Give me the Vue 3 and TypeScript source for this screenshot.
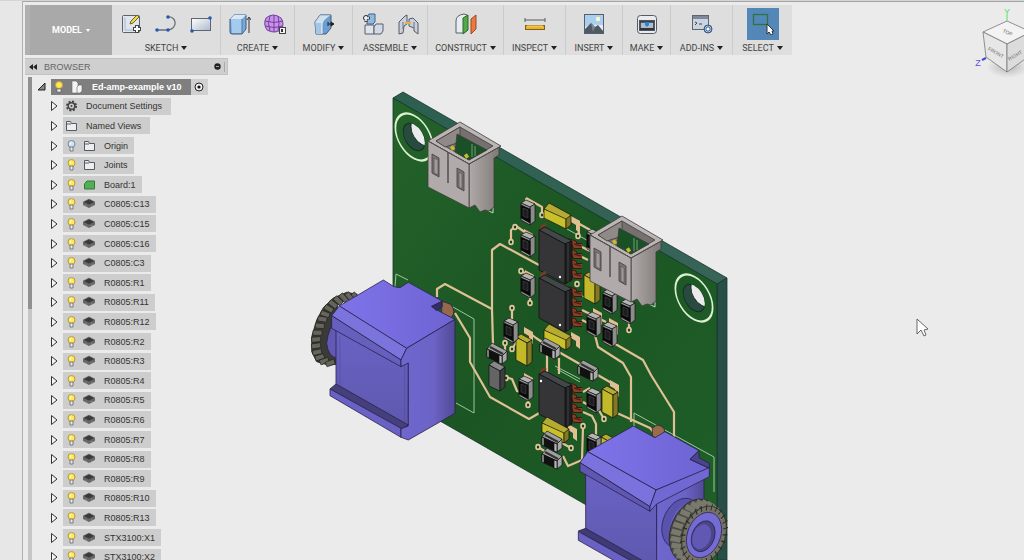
<script setup lang="ts">
interface ToolGroup { label: string; icons: string[]; active?: boolean }
interface TreeNode { label: string; icon: 'gear' | 'folder' | 'board' | 'part'; bulb?: 'on' | 'off' }
type Point = [number, number]

const icons: Record<string, string> = {
  sketch: '<rect x="2.500" y="2.500" width="17" height="17" rx="1" fill="#dfe5ee" stroke="#5a6270"/><path d="M5 5v12h12" fill="none" stroke="#a9b6ca"/><path d="M10 11l1-3 6-6 2 2-6 6z" fill="#f0dc3c" stroke="#6b6424"/><path d="M17 12v8M13 16h8" stroke="#444" stroke-width="4"/><path d="M17 13v6M14 16h6" stroke="#fff" stroke-width="2"/>',
  arc: '<path d="M1 17h12M13 4c9-1 10 12 0 13" fill="none" stroke="#68707c" stroke-width="1.300"/><g fill="#2858b0"><circle cx="2" cy="17" r="1.800"/><circle cx="13" cy="17" r="1.800"/><circle cx="13" cy="4" r="1.800"/></g>',
  rect: '<defs><linearGradient id="rg" x2="1" y2="1"><stop stop-color="#fff"/><stop offset="1" stop-color="#aeb9cb"/></linearGradient></defs><rect x="1.500" y="5.500" width="19" height="12" fill="url(#rg)" stroke="#5d6675"/><circle cx="20" cy="5" r="1.800" fill="#2858b0"/><circle cx="2" cy="18" r="1.800" fill="#2858b0"/>',
  extrude: '<path d="M1 6l4-4h12v14l-4 5H3q-2 0-2-2z" fill="#76a9dc" stroke="#435a76"/><path d="M1 6l4-4h12l-4 4z" fill="#d7e9f8"/><path d="M2 6h11v14H3z" fill="#a4cbee"/><path d="M13 6v14" stroke="#56789c"/><path d="M20 20V5M18 7l2-3 2 3" fill="none" stroke="#333"/>',
  form: '<path d="M2 5q7-6 15 0 4 6 0 12-7 4-14 0-4-6-1-12z" fill="#c793e8" stroke="#7540a0"/><path d="M6 3q-3 7 0 15M10 2v17M14 3q2 7 0 15M1 8q9 3 18 0M1 13q9 3 18 0" fill="none" stroke="#7540a0"/><rect x="15.500" y="14.500" width="6" height="6" fill="#f4f4f4" stroke="#444"/><path d="M17 16h2v3h-2z" fill="#333"/>',
  modify: '<path d="M2 9l5-7h11v13l-5 6H3z" fill="#6a9fd4" stroke="#435a76"/><path d="M2 9l5-7h11l-5 4q-2 1-3 5v10H3z" fill="#cfe0ef" stroke="#6f8aa6" stroke-width=".600"/><path d="M3 10h5v10H3z" fill="#a4c6e6"/><path d="M15 11h5M18 9l3 2-3 2zM15 9v4" fill="#222" stroke="#222"/>',
  assemble: '<path d="M3 12h9v9H3z" fill="#dfe4eb" stroke="#555f6e"/><path d="M12 14l2-3h7v7l-2 3h-7z" fill="#d4dae3" stroke="#555f6e"/><path d="M5 4l2-3h6v8l-2 2H5z" fill="#8db9e3" stroke="#46607c"/><path d="M4 2v7M1 5h7" stroke="#444" stroke-width="3"/><path d="M4 3v5M2 5h5" stroke="#fff" stroke-width="1.500"/>',
  joint: '<path d="M2 9l6-6 2-1v9l-3 2-1 7-4 1z" fill="#c9d0d9" stroke="#525b68"/><path d="M12 6l4-1 5 5v11l-4-3v-3l-5-2z" fill="#c9d0d9" stroke="#525b68"/><path d="M6 9v7M17 9v6" stroke="#68727f"/><path d="M8 10h6" stroke="#e8ad52" stroke-width="2"/>',
  construct: '<path d="M1 20V8q0-6 8-7l3 1v15l-4 3z" fill="#e8ebef" stroke="#54606a"/><path d="M8 5l5-3v15l-5 4z" fill="#55a847" stroke="#2d6b29"/><path d="M16 6l5-4v14l-5 5z" fill="#ed7a3c" stroke="#984a25"/>',
  inspect: '<path d="M1 7h20M1 5v4M21 5v4" fill="none" stroke="#565c64"/><rect x="1.500" y="12.500" width="19" height="4" fill="#eab42e" stroke="#80611c"/><path d="M3 13h16" stroke="#ffda6b"/>',
  insert: '<rect x="1.500" y="1.500" width="19" height="19" fill="#a8cff0" stroke="#56606c"/><path d="M2 14q4-3 18-2v8H2z" fill="#e9edf1"/><path d="M2 20v-4l6-6 4 4 3-2 5 6v2z" fill="#4e5965"/><path d="M8 10l4 4-2 5z" fill="#7c8791"/><circle cx="15" cy="6" r="2.200" fill="#fff8c4"/>',
  make: '<rect x="1.500" y="2.500" width="19" height="18" rx="3" fill="#e9ebee" stroke="#555b64"/><rect x="3" y="7" width="16" height="11" fill="#4d5560"/><path d="M5 9h12v7H5z" fill="#aebccb"/><path d="M4 9h14" stroke="#333b46" stroke-width="1.500"/><path d="M9 9h4v3l-2 2-2-2z" fill="#2d83d2"/><path d="M4 16h14" stroke="#333" stroke-width="2"/>',
  addins: '<rect x="1.500" y="2.500" width="16" height="14" fill="#cbd4e0" stroke="#5d6571"/><path d="M2 3h15v3H2z" fill="#7d8998"/><path d="M4 9l2 1-2 2M8 11h3" fill="none" stroke="#444"/><circle cx="17" cy="16" r="4" fill="#b5cbea" stroke="#38567f"/><path d="M17 12v8M13 16h8M14 13l6 6M20 13l-6 6" stroke="#38567f" stroke-width=".800"/><circle cx="17" cy="16" r="1.300" fill="#fff"/>',
  select: '<rect x="1.500" y="1.500" width="14" height="10" fill="none" stroke="#2f7440" stroke-width="1.300"/><path d="M15 11v10l2-2 2 3 2-1-1-3h2z" fill="#fff" stroke="#333"/>',
}

const groups: ToolGroup[] = [
  { label: 'SKETCH', icons: ['sketch', 'arc', 'rect'] },
  { label: 'CREATE', icons: ['extrude', 'form'] },
  { label: 'MODIFY', icons: ['modify'] },
  { label: 'ASSEMBLE', icons: ['assemble', 'joint'] },
  { label: 'CONSTRUCT', icons: ['construct'] },
  { label: 'INSPECT', icons: ['inspect'] },
  { label: 'INSERT', icons: ['insert'] },
  { label: 'MAKE', icons: ['make'] },
  { label: 'ADD-INS', icons: ['addins'] },
  { label: 'SELECT', icons: ['select'], active: true },
]

const parts = ['C0805:C13', 'C0805:C15', 'C0805:C16', 'C0805:C3', 'R0805:R1', 'R0805:R11', 'R0805:R12', 'R0805:R2', 'R0805:R3', 'R0805:R4', 'R0805:R5', 'R0805:R6', 'R0805:R7', 'R0805:R8', 'R0805:R9', 'R0805:R10', 'R0805:R13', 'STX3100:X1', 'STX3100:X2']
const nodes: TreeNode[] = [
  { label: 'Document Settings', icon: 'gear' },
  { label: 'Named Views', icon: 'folder' },
  { label: 'Origin', icon: 'folder', bulb: 'off' },
  { label: 'Joints', icon: 'folder', bulb: 'on' },
  { label: 'Board:1', icon: 'board', bulb: 'on' },
  ...parts.map((label): TreeNode => ({ label, icon: 'part', bulb: 'on' })),
]

const traces = [
  'M437 297V289L445 284L490 308L492 309V250L500 244L539 265',
  'M492 309L493 345', 'M455 313L470 338V362L490 397L529 419L541 412',
  'M595 335L598 347L623 363L631 377V422', 'M612 342L643 360L651 375L674 412V440',
  'M617 413L650 428L662 442', 'M583 412L592 416L596 424V436',
  'M583 427L582 460L568 466L563 456', 'M557 351L585 367', 'M596 374L615 385',
  'M547 355V372M559 358V374', 'M511 241V230L516 226L529 235', 'M526 198L542 207V215L548 219',
  'M567 217L592 231', 'M578 220L579 236', 'M521 271L529 275', 'M530 303V295', 'M512 308V325',
  'M582 247L590 251M582 257L588 260M582 310L606 322M582 320L590 324', 'M629 330V316',
  'M528 405V393', 'M538 447L546 452M571 448L562 443', 'M583 392L590 388M583 402L590 406',
  'M604 419L597 407', 'M505 377L512 379L517 391L523 393', 'M526 330L536 338L545 344', 'M512 349L518 340M505 343V352',
]
const vias: Point[] = [[515, 227], [511, 242], [521, 271], [530, 303], [512, 308], [505, 343], [578, 236], [577, 284], [629, 330], [542, 215], [528, 405], [538, 447], [571, 448], [583, 426], [604, 419], [512, 349], [506, 378]]
const pads: Point[] = [[525, 198], [571, 216], [524, 229], [525, 270], [524, 327], [610, 380], [593, 308], [571, 332], [568, 424], [524, 373], [609, 318]]
const tallChips: Point[] = [[587, 229], [521, 200], [521, 232], [521, 273], [504, 318], [603, 289], [621, 299], [587, 312], [603, 322], [519, 376], [587, 388], [587, 433]]
const wideChips: Point[] = [[487, 343], [540, 338], [578, 360], [542, 431], [542, 448]]
const wideYellow: Point[] = [[544, 203], [544, 324], [542, 417]]
const tallYellow: Point[] = [[584, 272], [516, 334], [602, 386], [601, 434]]
const circuits: Point[] = [[539, 227], [539, 275], [539, 371]]
const connectors: Point[] = [[0, 0], [162, 94]]
const holes: Point[] = [[414, 137], [694, 298]]

const knurl = Array.from({ length: 26 }, (_, i) => {
  const a = (i / 26) * Math.PI * 2
  return { x: Math.cos(a), y: Math.sin(a) }
})
const sideTeeth: Point[] = [[158, 85], [140, 84], [122, 88], [105, 97], [89, 109], [75, 124], [63, 142], [54, 160], [46, 181], [39, 203], [35, 224], [35, 244], [38, 264], [46, 280], [60, 292], [78, 298]]
</script>

<template>
  <div class="app">
    <main class="viewport" aria-label="Model viewport">
      <svg class="model" viewBox="0 0 1024 560" stroke-linejoin="round">
        <defs>
          <linearGradient id="boardFill" x1="0" y1="0" x2="1" y2="1">
            <stop offset="0" stop-color="#24632a" /><stop offset=".45" stop-color="#1b5523" /><stop offset="1" stop-color="#206029" />
          </linearGradient>
          <linearGradient id="edgeFill"><stop stop-color="#2c5f50" /><stop offset="1" stop-color="#386458" /></linearGradient>
          <linearGradient id="plastic"><stop stop-color="#b0aaa8" /><stop offset="1" stop-color="#7f7977" /></linearGradient>
          <linearGradient id="jackTop" x1="0" y1="0" x2="1" y2="0"><stop stop-color="#7f73ea" /><stop offset="1" stop-color="#6e63d2" /></linearGradient>
          <linearGradient id="jackSide"><stop stop-color="#7067cf" /><stop offset=".6" stop-color="#6c63c6" /><stop offset="1" stop-color="#514a96" /></linearGradient>
          <linearGradient id="jackFront" x1="0" y1="0" x2="0" y2="1"><stop stop-color="#6962c4" /><stop offset="1" stop-color="#5e59ae" /></linearGradient>
          <clipPath id="bore"><circle r="12.500" /></clipPath>
        </defs>

        <g stroke="#17352c" stroke-width=".8">
          <path d="M393 98L403 92L727 278L717 284Z" fill="url(#edgeFill)" />
          <path d="M717 284L727 278V560H717Z" fill="#284f47" />
          <path d="M393 98L717 284V580L393 394Z" fill="url(#boardFill)" />
        </g>

        <g v-for="[x, y] in holes" :key="x" :transform="`matrix(.866 .44 0 1 ${x} ${y})`">
          <circle r="21.500" fill="none" stroke="#dcf0d4" stroke-width="2" />
          <circle r="12.500" fill="#294a40" stroke="#152f22" />
          <g clip-path="url(#bore)"><circle cx="9" cy="-9" r="12.500" fill="#ebebeb" stroke="#152f22" /></g>
        </g>

        <g fill="none" stroke="#9fc79b" stroke-width="1">
          <path d="M395 287L396 274L408 280M453 307L474 319V413L456 403" />
          <path d="M634 436V413L714 457V492M560 225L592 243M557 369L580 382M555 366L580 379M562 284L584 297" />
          <path d="M493 157V213L487 210M655 251V307L649 304" stroke="#c4dec0" />
        </g>

        <g fill="none" stroke="#dfc195" stroke-width="2.200">
          <path v-for="d in traces" :key="d" :d="d" />
        </g>
        <g fill="#e0bf91">
          <path v-for="[x, y] in pads" :key="`${x}-${y}`" :transform="`translate(${x} ${y})`" d="M0 0L9 5V17L5 14V9L0 6Z" />
        </g>
        <g fill="#173f20" stroke="#e3c89e" stroke-width="1.600">
          <ellipse v-for="[x, y] in vias" :key="`${x}-${y}`" :cx="x" :cy="y" rx="2" ry="2.400" />
        </g>

        <g v-for="[x, y] in circuits" :key="y" :transform="`translate(${x} ${y})`">
          <path d="M2 0L7 -3M1 3L5 -1" stroke="#743c25" stroke-width="3" />
          <g v-for="n in 4" :key="n" :transform="`translate(29 ${n * 10 + 4})`">
            <path d="M0 0L6 2L7 5L14 5" fill="none" stroke="#35180f" stroke-width="6" />
            <path d="M0 0L6 2L7 5L14 5" fill="none" stroke="#873f27" stroke-width="4" />
            <path d="M6 3L13 5" stroke="#4d2316" stroke-width="1.500" />
          </g>
          <g stroke="#111" stroke-width=".8">
            <path d="M0 3L6 0L33 14L26 17Z" fill="#44474a" />
            <path d="M26 17L33 14V53L26 57Z" fill="#1e1e20" />
            <path d="M0 3L26 17V57L0 43Z" fill="#353436" />
            <path d="M29 16V55" stroke="#4b4a4c" />
          </g>
          <circle :cx="y > 300 ? 2 : 21" :cy="y > 300 ? 10 : 50" r="1.200" fill="#fff" />
        </g>

        <g stroke="#111" stroke-width=".7">
          <g v-for="[x, y] in wideYellow" :key="y" :transform="`translate(${x} ${y})`">
            <path d="M0 6L5 0L27 12L22 18Z" fill="#b5ab32" />
            <path d="M0 6L22 16V26L0 15Z" fill="#c9c02c" /><path d="M22 16L27 12V22L22 26Z" fill="#817a22" />
          </g>
          <g v-for="[x, y] in tallYellow" :key="y" :transform="`translate(${x} ${y})`">
            <path d="M0 3L5 0L16 6L11 9Z" fill="#b5ab32" />
            <path d="M0 3L11 9V32L0 26Z" fill="#c2b92a" /><path d="M11 9L16 6V28L11 32Z" fill="#817a22" />
          </g>
          <g transform="translate(489 361)">
            <path d="M0 4L5 0L16 6L11 10Z" fill="#898789" /><path d="M0 4L11 10V30L0 25Z" fill="#656465" /><path d="M11 10L16 6V26L11 30Z" fill="#3d3c3e" />
          </g>
          <g v-for="[x, y] in tallChips" :key="`${x}-${y}`" :transform="`translate(${x} ${y})`">
            <path d="M0 3L5 0L14 4L9 7Z" fill="#b4b4b4" /><path d="M9 7L14 4V21L9 25Z" fill="#8d8c8d" />
            <path d="M0 3L9 7V25L0 20Z" fill="#a2a1a1" /><path d="M0 5L9 9V23L0 18Z" fill="#080808" />
            <path d="M2 8L7 10V18L2 16Z" fill="#1d1d20" stroke="#555" stroke-width=".5" />
          </g>
          <g v-for="[x, y] in wideChips" :key="y" :transform="`translate(${x} ${y})`">
            <path d="M0 6L5 0L20 8L15 13Z" fill="#a1a0a0" /><path d="M15 13L20 8V17L15 21Z" fill="#aaa9a9" />
            <path d="M0 6L15 13V21L0 14Z" fill="#111" /><path d="M0 6L2 7V15L0 14ZM12 12L15 13V21L12 20Z" fill="#b5b4b4" />
            <path d="M3 4L16 11" stroke="#333" stroke-width="2" />
          </g>
        </g>

        <g v-for="[x, y] in connectors" :key="x" :transform="`translate(${x} ${y})`" stroke="#403c3b" stroke-width=".8">
          <path d="M469 164L499 147V155L494 158V207L489 211L485 210L480 212L475 205L469 208Z" fill="url(#plastic)" />
          <path d="M428 141L460 122L501 146L469 164Z" fill="#bbb6b4" />
          <path d="M436 141L460 127L493 146L469 160Z" fill="#767170" />
          <path d="M436 141L460 127V142L445 147Z" fill="#8f8a88" />
          <path d="M457 134L487 150L469 160L455 152Z" fill="#195026" />
          <path d="M472 144V157M475 146V156" stroke="#8ab68a" />
          <path d="M428 141L469 164V208L428 187Z" fill="#b0abaa" />
          <path d="M432 154L439 158V177L432 173ZM457 168L464 172V191L457 187Z" fill="#7b7674" />
          <path d="M434 158L438 160V175L434 173ZM459 172L462 174V189L459 187Z" fill="#a09b99" stroke-width=".5" />
          <path d="M448 152V183" stroke="#47403e" stroke-width="1.300" />
          <path d="M428 141L469 164L501 146" fill="none" stroke="#55504e" />
          <path d="M451 149L454 147M465 157L468 155" stroke="#c5bb30" stroke-width="4" />
        </g>

        <g transform="translate(300 265) scale(.3333)" stroke="#28224b" stroke-width="2.400">
          <path d="M172 88L140 82L100 99L70 128L50 165L35 215L35 260L50 290L85 300L112 298V120Z" fill="#3a3a36" stroke="#20201e" />
          <g v-for="[x, y] in sideTeeth" :key="`${x}-${y}`" stroke="#20201e" stroke-width="2">
            <rect :x="x" :y="y - 7" width="27" height="15" rx="2" fill="#66655c" :transform="`rotate(${y < 150 ? 50 - (y - 84) / 2 : 10 - (y - 150) / 5} ${x} ${y})`" />
          </g>
          <path d="M112 165Q85 185 80 235Q84 275 112 280Z" fill="#6259b3" />
          <path d="M425 108L452 118Q470 140 454 158L425 145Z" fill="#96684b" />
          <path d="M118 123L250 45L282 65L300 68L325 52L428 109L395 124L420 140L465 163L320 250Z" fill="url(#jackTop)" />
          <path d="M395 124L427 108V125L410 137Z" fill="#322d68" />
          <path d="M108 195L325 295V490L108 362Z" fill="url(#jackFront)" />
          <path d="M120 215L120 365M314 300V480" stroke="#504997" stroke-width="1.500" />
          <path d="M118 123L320 250L303 285L95 152Z" fill="#7c74dd" />
          <path d="M95 152L303 285V305L95 190Z" fill="#675fbd" />
          <path d="M108 357L325 480L303 492L90 372Z" fill="#453f7c" />
          <path d="M90 372L303 490V517L90 392Z" fill="#6a61c4" />
          <path d="M320 250L465 163V445L325 525L303 517V492L325 483V294L303 305V285Z" fill="url(#jackSide)" />
        </g>

        <g transform="translate(570 410) scale(.3333)" stroke="#28224b" stroke-width="2.400">
          <path d="M247 76V55Q265 35 283 57V78L258 86Z" fill="#9a6b48" />
          <path d="M47 190L260 285V470H225L47 360Z" fill="url(#jackFront)" />
          <path d="M260 280L402 200V460H260Z" fill="url(#jackSide)" />
          <path d="M53 125L190 48L255 83L285 65L387 122L360 148L418 175L258 240Z" fill="url(#jackTop)" />
          <path d="M360 148L387 122V143L418 160V175Z" fill="#4a438d" />
          <path d="M53 125L258 240L240 290L30 158Z" fill="#7b72dd" />
          <path d="M30 158L240 290V304L30 184Z" fill="#5f57b1" />
          <path d="M258 240L418 173V200L260 282L240 304V290Z" fill="#7268d3" />
          <path d="M47 355L232 460H190L25 363Z" fill="#403a75" />
          <path d="M25 365L190 456H140L25 391Z" fill="#6a61c4" />
        </g>
        <g stroke="#28224b" stroke-width=".8">
          <circle r="24" transform="matrix(.8 -.25 0 1 681 523)" fill="#5a53ae" />
          <circle r="23" transform="matrix(.8 -.25 0 1 688 526)" fill="#6d63ce" stroke="none" />
          <circle r="31" transform="matrix(.8 -.25 0 1 694 531)" fill="#4b4a43" stroke="#222" />
          <g transform="matrix(.8 -.25 0 1 694 531)" stroke="#7a796e" stroke-width="5">
            <path v-for="(k, i) in knurl" :key="i" :d="`M${k.x * 29} ${k.y * 29}L${k.x * 27 + 10} ${k.y * 27 + 5}`" />
          </g>
          <g transform="matrix(.8 -.25 0 1 704 535)">
            <circle r="28" fill="#747267" stroke="#292923" />
            <path v-for="(k, i) in knurl" :key="i" :d="`M${k.x * 24} ${k.y * 24}L${k.x * 30} ${k.y * 30}`" stroke="#2b2a26" stroke-width="1.200" />
            <circle r="22" fill="#756cd3" /><circle r="15" cx="-1" cy="1" fill="#4b448b" />
            <circle cx="-3" cy="1" r="12" fill="#6158b4" stroke="none" />
          </g>
          <path d="M917 319V334L921 330L924 336L926 335L924 330L928 329Z" fill="#fff" stroke="#444" />
        </g>
      </svg>

      <svg class="cube" width="50" height="72" viewBox="974 6 50 72" role="img" aria-label="View cube">
        <defs><radialGradient id="cubeShadow"><stop stop-color="#777" stop-opacity=".5" /><stop offset="1" stop-color="#999" stop-opacity="0" /></radialGradient></defs>
        <ellipse cx="1008" cy="67" rx="22" ry="11" fill="url(#cubeShadow)" />
        <g stroke="#777" stroke-width=".8">
          <path d="M983 32L1007 21L1031 32L1007 44Z" fill="#f3f3f3" />
          <path d="M983 32L1007 44V72L986 57Z" fill="#e7e7e7" />
          <path d="M1007 44L1031 32L1028 57L1007 72Z" fill="#dcdcdc" />
        </g>
        <path d="M1007 15V21" stroke="#5be35b" /><path d="M982 60L986 58" stroke="#4b47c8" stroke-width="2" />
        <g class="cube-text" text-anchor="middle">
          <text x="1007" y="15" fill="#55e255" class="axis">Y</text>
          <text x="978" y="66" fill="#5955dc" class="axis">Z</text>
          <text transform="translate(1007 34) rotate(24)">TOP</text>
          <text transform="translate(995 54) rotate(30)">FRONT</text>
          <text transform="translate(1016 57) rotate(-30)">RIGHT</text>
        </g>
      </svg>
    </main>

    <div class="shell">
      <div class="gutter"></div>
      <div class="workspace">
        <nav class="toolbar" aria-label="Tools">
          <button class="mode" type="button"><span>MODEL</span><i class="caret"></i></button>
          <div v-for="group in groups" :key="group.label" class="group">
            <div class="icons">
              <button v-for="name in group.icons" :key="name" type="button" class="icon" :class="{ active: group.active }" :aria-label="name">
                <svg width="22" height="22" viewBox="0 0 22 22" v-html="icons[name]"></svg>
              </button>
            </div>
            <button class="menu" type="button"><span>{{ group.label }}</span><i class="caret"></i></button>
          </div>
        </nav>

        <aside class="browser">
          <header class="browser-head">
            <svg width="8" height="6" viewBox="0 0 8 6"><path d="M4 0V6L0 3ZM8 0V6L4 3Z" fill="#222" /></svg>
            <span>BROWSER</span>
            <svg class="dot" width="7" height="7" viewBox="0 0 7 7"><circle cx="3.500" cy="3.500" r="3.200" fill="#222" /><path d="M2 3.500H5" stroke="#aaa" /></svg>
            <i class="grip"></i>
          </header>
          <div class="tree-wrap">
            <div class="track"><i class="scroll"></i></div>
            <ul class="tree">
              <li class="row root">
                <svg class="arrow" width="9" height="9" viewBox="0 0 9 9"><path d="M8 1V8H1Z" fill="#888" stroke="#222" /></svg>
                <button class="chip" type="button">
                  <svg width="16" height="14" viewBox="0 0 16 14"><circle cx="8" cy="5" r="3.500" fill="#ffe65c" stroke="#bda335" /><path d="M6 9H10V12H6Z" fill="#eee" stroke="#555" stroke-width=".6" /></svg>
                  <svg width="20" height="14" viewBox="0 0 20 14"><path d="M5 1H9L11 3V13H5Z" fill="#f4f4f4" stroke="#666" stroke-width=".6" /><path d="M10 7L12 5H15V11L13 13H10Z" fill="#f4f4f4" stroke="#666" stroke-width=".6" /></svg>
                  <span>Ed-amp-example v10</span>
                </button>
                <button class="target" type="button" aria-label="Activate component">
                  <svg width="10" height="10" viewBox="0 0 10 10"><circle cx="5" cy="5" r="4" fill="#eee" stroke="#222" /><circle cx="5" cy="5" r="1.600" fill="#111" /></svg>
                </button>
              </li>
              <li v-for="node in nodes" :key="node.label" class="row">
                <svg class="arrow" width="8" height="10" viewBox="0 0 8 10"><path d="M1.500 .5V9.500L7 5Z" fill="#f4f4f4" stroke="#333" /></svg>
                <button class="chip" :class="{ lit: node.bulb }" type="button">
                  <svg v-if="node.bulb" width="18" height="14" viewBox="0 0 18 14">
                    <circle cx="8.500" cy="5" r="3.500" :fill="node.bulb === 'on' ? '#ffe95f' : '#cfe3f7'" :stroke="node.bulb === 'on' ? '#b39c39' : '#6f87a0'" />
                    <path d="M7 8H10V12H7Z" fill="#e9e9e9" stroke="#666" stroke-width=".8" /><path d="M7.500 5.500V3.500" stroke="#fff" />
                  </svg>
                  <svg v-if="node.icon === 'gear'" width="18" height="14" viewBox="0 0 18 14"><circle cx="8.500" cy="7" r="4.500" fill="none" stroke="#444" stroke-width="2" stroke-dasharray="2 1.530" /><circle cx="8.500" cy="7" r="3.300" fill="none" stroke="#444" stroke-width="1.400" /><circle cx="8.500" cy="7" r="1" fill="#444" /></svg>
                  <svg v-else-if="node.icon === 'folder'" width="18" height="14" viewBox="0 0 18 14"><path d="M3.500 11.500V2.500H7.500L8.500 4.500H13.500V11.500Z" fill="#eee" stroke="#555b66" /><path d="M4 5H8" stroke="#555b66" /></svg>
                  <svg v-else-if="node.icon === 'board'" width="18" height="14" viewBox="0 0 18 14"><path d="M3.500 11V6L6 3H13.500V11Z" fill="#51b152" stroke="#34763a" /></svg>
                  <svg v-else width="18" height="14" viewBox="0 0 18 14"><path d="M2 5V8L8 11L14 8V5Z" fill="#666" /><path d="M2 5L8 2L14 5L8 8Z" fill="#3a3a3a" stroke="#777" stroke-width=".5" /><path d="M5 8V10M11 8V10" stroke="#999" stroke-width=".7" /></svg>
                  <span>{{ node.label }}</span>
                </button>
              </li>
            </ul>
          </div>
        </aside>
      </div>
    </div>
  </div>
</template>

<style>
body { background: #ebebeb; overflow: hidden; }
</style>

<style scoped>
.app { position: relative; height: 100vh; overflow: hidden; background: #ebebeb; color: #333; font-family: "Liberation Sans", Arial, sans-serif; font-size: 9px; }
.app * { box-sizing: border-box; }
button { border: 0; padding: 0; margin: 0; background: none; color: inherit; font: inherit; }
svg { display: block; flex: none; }
.viewport { position: absolute; inset: 0; }
.model { width: 100%; height: 100%; }
.cube { position: absolute; top: 6px; right: 0; }
.cube-text { font-size: 5px; fill: #6b6b6b; }
.axis { font-size: 9px; }
.shell { position: relative; display: flex; height: 100%; border-top: 1px solid #d5d5d5; pointer-events: none; }
.shell button { pointer-events: auto; }
.gutter { flex: 0 0 23px; background: #e7e7e7; border-right: 1px solid #b0b0b0; }
.workspace { flex: 1; min-width: 0; border-top: 1px solid #a5a5a5; padding: 3px 0 0 2px; }
.toolbar { display: grid; grid-template-columns: 87px 109px 74px 58px 75px 76px 62px 57px 48px 62px 59px; width: max-content; height: 50px; background: #dedede; font-family: Roboto, sans-serif; }
.mode { display: flex; align-items: center; justify-content: center; gap: 4px; background: #a9a9a9; color: #fff; font-weight: 700; border-left: 5px solid #b0b0b0; }
.caret { width: 0; height: 0; border: 2px solid transparent; border-width: 4px 3px 0; border-top-color: currentColor; }
.mode .caret { border-width: 3px 2px 0; }
.group { display: flex; flex-direction: column; align-items: center; border-right: 1px solid #cbcbcb; padding-top: 3px; }
.group:last-child { border-right: 0; }
.icons { display: flex; gap: 3px; height: 32px; align-items: center; }
.icon { display: grid; place-items: center; width: 32px; height: 32px; }
.icon.active { background: #5287b7; }
.menu { display: flex; align-items: center; gap: 3px; line-height: 12px; margin-top: 2px; color: #444; }
.menu .caret { color: #222; }
.browser { width: 203px; padding-top: 3px; }
.browser-head { display: flex; align-items: center; gap: 7px; height: 17px; padding: 0 2px 0 4px; background: #cfcfcf; border: 1px solid #c2c2c2; border-left: 0; color: #666; }
.dot { margin-left: auto; }
.grip { width: 1px; height: 10px; background: #aaa; margin-left: -4px; }
.tree-wrap { display: flex; align-items: flex-start; padding: 2px 0 0 3px; }
.track { flex: none; width: 4px; height: 490px; background: #c6c6c6; }
.scroll { display: block; height: 232px; background: #909090; }
.tree { display: grid; grid-auto-rows: 1fr; height: 490px; margin: 0; padding: 0; list-style: none; }
.row { display: flex; align-items: center; padding-left: 18px; }
.root { padding-left: 5px; }
.arrow { margin-right: 5px; }
.chip { display: flex; align-items: center; height: 17px; padding-right: 9px; background: #cdcdcd; color: #333; white-space: nowrap; }
.chip.lit { padding-right: 6px; }
.chip span { padding-left: 5px; }
.root .chip { background: #7f7f7f; color: #fff; font-weight: 700; height: 16px; }
.target { display: grid; place-items: center; width: 17px; height: 16px; background: #d0d0d0; }
</style>
